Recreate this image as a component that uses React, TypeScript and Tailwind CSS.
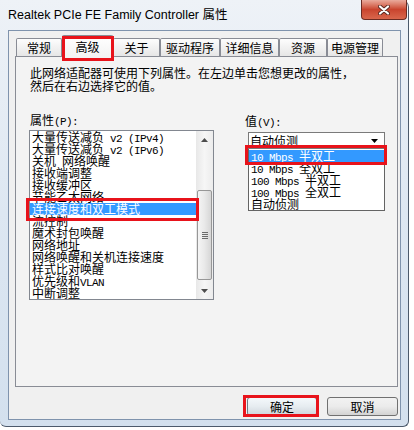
import React from 'react'

const cjk = "font-['Noto_Sans_CJK_SC','Noto_Sans',sans-serif]"

const props = [
  '大量传送减负 v2 (IPv4)',
  '大量传送减负 v2 (IPv6)',
  '关机 网络唤醒',
  '接收端调整',
  '接收缓冲区',
  '节能乙太网络',
  '连接速度和双工模式',
  '流控制',
  '魔术封包唤醒',
  '网络地址',
  '网络唤醒和关机连接速度',
  '样式比对唤醒',
  '优先级和VLAN',
  '中断调整',
]

const values = ['10 Mbps 半双工', '10 Mbps 全双工', '100 Mbps 半双工', '100 Mbps 全双工', '自动侦测']

const tabs = [
  { label: '常规', w: 'w-[46px]' },
  { label: '高级', w: 'w-[51px]', active: true },
  { label: '关于', w: 'w-[47px]' },
  { label: '驱动程序', w: 'w-[60px]' },
  { label: '详细信息', w: 'w-[59px]' },
  { label: '资源', w: 'w-[48px]' },
  { label: '电源管理', w: 'w-[56px]' },
]

// ascii runs drawn half-width like the old song font
function Mixed({ text }: { text: string }) {
  const parts = text.split(/([\x20-\x7e]+)/).filter((p) => p !== '')
  return (
    <>
      {parts.map((p, i) =>
        /^[\x20-\x7e]+$/.test(p) ? (
          <span key={i} className="font-['Liberation_Mono',monospace] text-[11px] tracking-[-0.6px] whitespace-pre">
            {p}
          </span>
        ) : (
          <span key={i}>{p}</span>
        )
      )}
    </>
  )
}

const RedBox = ({ className }: { className: string }) => (
  <span className={`pointer-events-none absolute z-20 border-[3px] border-[#e8131b] ${className}`} />
)

const Arrow = ({ up }: { up?: boolean }) => (
  <svg width="7" height="4" viewBox="0 0 7 4">
    <path d={up ? 'M0 4 L3.5 0 L7 4 Z' : 'M0 0 L3.5 4 L7 0 Z'} fill="#4d4d4d" />
  </svg>
)

const App = () => {
  return (
    <div className={`w-[414px] h-[430px] bg-white overflow-hidden ${cjk} text-[12px] text-black`}>
      <div className="flex flex-col w-[409px] h-[427px] pl-[8px] pr-[7px] pb-[6px] border-r border-b border-[#4c5a6c] rounded-tr-[7px] rounded-b-[6px] bg-gradient-to-b from-[#eef2f7] via-[#dde7f2] to-[#d3e0ee]">
        {/* title bar */}
        <div className="flex items-start justify-between h-[30px] -mr-[6px]">
          <span className="mt-[7px] font-['Liberation_Sans',Arial,'Noto_Sans_CJK_SC',sans-serif] text-[12.5px] leading-[16px] text-black whitespace-nowrap">
            Realtek PCIe FE Family Controller 属性
          </span>
          <div className="flex items-center justify-center w-[46px] h-[20px] border border-t-0 border-[#6b2b22] rounded-b-[4px] bg-gradient-to-b from-[#e9aa9c] via-[#c9442e] to-[#d9664c]">
            <svg width="12" height="10" viewBox="0 0 12 10">
              <path d="M2 1.5 L10 8.5 M10 1.5 L2 8.5" stroke="#5a2a22" strokeWidth="4" strokeLinecap="round" />
              <path d="M2 1.5 L10 8.5 M10 1.5 L2 8.5" stroke="#ffffff" strokeWidth="2.2" strokeLinecap="round" />
            </svg>
          </div>
        </div>

        {/* client area */}
        <div className="flex-1 border border-[#7f93ad] bg-[#f0f0f0]">
          <div className="ml-[6px] mt-[4px] w-[383px]">
            {/* tabs */}
            <div className="flex items-end h-[21px] pl-[1px]">
              {tabs.map((t) =>
                t.active ? (
                  <div
                    key={t.label}
                    className={`relative z-10 flex items-center justify-center ${t.w} h-[22px] -mb-px border border-b-0 border-[#898c95] rounded-t-[2px] bg-gradient-to-b from-white to-[#f3f3f3]`}
                  >
                    {t.label}
                    <RedBox className="left-[-1px] top-[0px] w-[52px] h-[25px]" />
                  </div>
                ) : (
                  <div
                    key={t.label}
                    className={`flex items-center justify-center ${t.w} h-[18px] border border-b-0 border-[#898c95] rounded-t-[2px] bg-gradient-to-b from-[#fdfdfd] to-[#e6e6e6]`}
                  >
                    {t.label}
                  </div>
                )
              )}
            </div>

            {/* tab page */}
            <div className="h-[331px] border border-[#898c95] bg-[#f3f3f3] pt-[9px] pl-[13px]">
              <div className="pl-[1px] leading-[13px] whitespace-nowrap">
                <p>此网络适配器可使用下列属性。在左边单击您想更改的属性，</p>
                <p>然后在右边选择它的值。</p>
              </div>

              <div className="flex mt-[22px]">
                <div className="w-[185px]">
                  <p className="pl-[1px] h-[12px] leading-[12px]">
                    <Mixed text="属性(P):" />
                  </p>
                  <div className="flex mt-[4px] h-[170px] border border-[#828790] bg-white">
                    <div className="flex-1 flex flex-col">
                      {props.map((p, i) =>
                        i === 6 ? (
                          <div key={p} className="relative h-[12px] leading-[12px] pl-[2px] whitespace-nowrap bg-[#3399ff] text-white">
                            <Mixed text={p} />
                            <RedBox className="left-[-4px] top-[-5px] w-[173px] h-[23px]" />
                          </div>
                        ) : (
                          <div key={p} className="h-[12px] leading-[12px] pl-[2px] whitespace-nowrap">
                            <Mixed text={p} />
                          </div>
                        )
                      )}
                    </div>
                    {/* scrollbar */}
                    <div className="flex flex-col w-[17px] bg-gradient-to-r from-[#e8e8e8] via-[#f6f6f6] to-[#ececec]">
                      <div className="flex items-center justify-center h-[17px]">
                        <Arrow up />
                      </div>
                      <div className="h-[42px]" />
                      <div className="flex flex-col items-center justify-center gap-[1px] h-[90px] mx-[1px] border border-[#979797] rounded-[2px] bg-gradient-to-r from-[#f5f5f5] via-[#e9e9e9] to-[#d6d6d6]">
                        <span className="block w-[6px] h-px bg-[#6b6b6b]" />
                        <span className="block w-[6px] h-px bg-[#6b6b6b]" />
                        <span className="block w-[6px] h-px bg-[#6b6b6b]" />
                        <span className="block w-[6px] h-px bg-[#6b6b6b]" />
                      </div>
                      <div className="h-[2px]" />
                      <div className="flex items-center justify-center h-[17px]">
                        <Arrow />
                      </div>
                    </div>
                  </div>
                </div>

                <div className="ml-[31px]">
                  <p className="mt-[1px] h-[12px] leading-[12px]">
                    <Mixed text="值(V):" />
                  </p>
                  <div className="flex items-center justify-between ml-[3px] mt-[5px] w-[137px] h-[17px] border border-[#7a7a7a] bg-white pl-[1px] pr-[6px] leading-[12px]">
                    <span>自动侦测</span>
                    <svg width="7" height="4" viewBox="0 0 7 4">
                      <path d="M0 0 L3.5 4 L7 0 Z" fill="#000" />
                    </svg>
                  </div>
                  <div className="ml-[3px] w-[137px] border border-t-0 border-[#646464] bg-white pt-[1px]">
                    {values.map((v, i) =>
                      i === 0 ? (
                        <div key={v} className="relative h-[12px] leading-[12px] pl-[2px] whitespace-nowrap bg-[#3399ff] text-white">
                          <Mixed text={v} />
                          <RedBox className="left-[-4px] top-[-5px] w-[142px] h-[20px]" />
                        </div>
                      ) : (
                        <div key={v} className="h-[12px] leading-[12px] pl-[2px] whitespace-nowrap">
                          <Mixed text={v} />
                        </div>
                      )
                    )}
                  </div>
                </div>
              </div>
            </div>

            {/* buttons */}
            <div className="flex justify-end gap-[10px] mt-[10px]">
              <button className="relative w-[70px] h-[19px] border border-[#6f7a86] rounded-[3px] bg-gradient-to-b from-[#f4f8fb] via-[#e6ecf0] to-[#cfd6dc] text-[12px] leading-[17px]">
                确定
                <RedBox className="left-[-5px] top-[-3px] w-[76px] h-[22px]" />
              </button>
              <button className="w-[71px] h-[19px] border border-[#707070] rounded-[3px] bg-gradient-to-b from-[#f2f2f2] via-[#ebebeb] to-[#d3d3d3] text-[12px] leading-[17px]">
                取消
              </button>
            </div>
          </div>
        </div>
      </div>
    </div>
  )
}

export default App
